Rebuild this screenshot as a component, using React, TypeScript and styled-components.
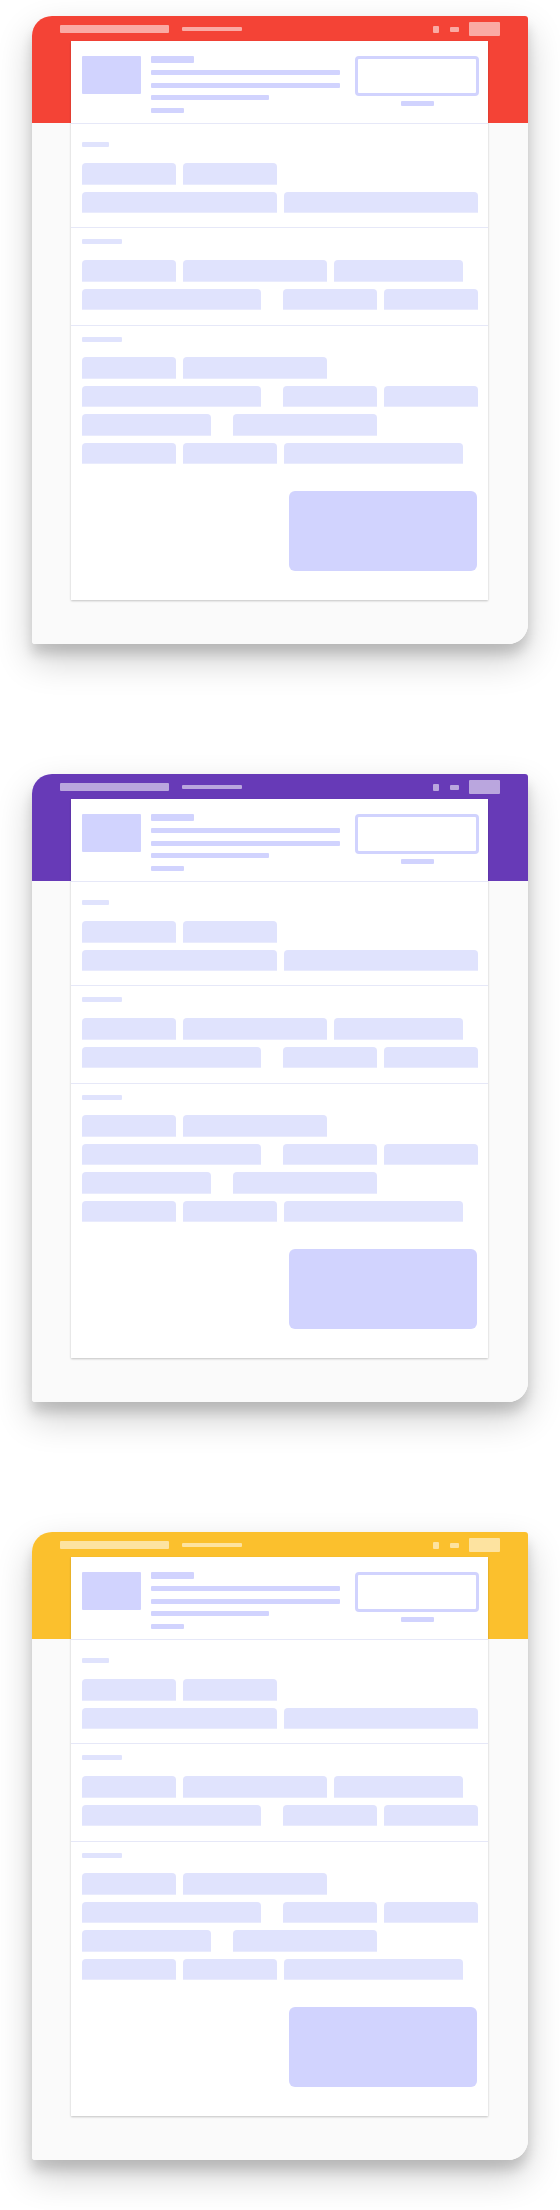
import { createGlobalStyle, styled } from "styled-components";

const GlobalStyle = createGlobalStyle`
  * { box-sizing: border-box; }
  body {
    margin: 0;
    background: #ffffff;
    font-family: "Liberation Sans", Arial, sans-serif;
  }
`;

const ACCENT = "#d1d3fe";
const LIGHT = "#e0e3fd";

const Page = styled.div`
  display: flex;
  flex-direction: column;
  gap: 130px;
  padding: 16px 32px 50px;
`;

const Card = styled.div<{ $color: string }>`
  display: flex;
  flex-direction: column;
  height: 628px;
  border-radius: 20px 3px 20px 3px;
  background: linear-gradient(
    to bottom,
    ${(p) => p.$color} 0,
    ${(p) => p.$color} 107px,
    #fafafa 107px
  );
  box-shadow: 0 16px 36px rgba(0, 0, 0, 0.2), 0 10px 12px rgba(0, 0, 0, 0.14);
`;

const TopBar = styled.div`
  display: flex;
  align-items: center;
  height: 25px;
  padding: 1px 28px 0;
`;

const Bar = styled.div<{ $w: number; $h: number; $ml?: number }>`
  width: ${(p) => p.$w}px;
  height: ${(p) => p.$h}px;
  margin-left: ${(p) => p.$ml ?? 0}px;
  border-radius: 1px;
  background: rgba(255, 255, 255, 0.55);
`;

const Spacer = styled.div`
  flex: 1;
`;

const Sheet = styled.div`
  display: flex;
  flex-direction: column;
  height: 559px;
  margin: 0 40px 0 39px;
  background: #ffffff;
  box-shadow: 0 1px 2px rgba(0, 0, 0, 0.22);
`;

const Header = styled.div`
  display: flex;
  align-items: flex-start;
  height: 83px;
  padding: 15px 9px 0 11px;
  border-bottom: 1px solid #e6e8f8;
`;

const Thumb = styled.div`
  width: 59px;
  height: 38px;
  border-radius: 1px;
  background: ${ACCENT};
`;

const TextCol = styled.div`
  display: flex;
  flex-direction: column;
  margin-left: 10px;
`;

const Line = styled.div<{ $w: number; $h?: number; $mt?: number }>`
  width: ${(p) => p.$w}px;
  height: ${(p) => p.$h ?? 5}px;
  margin-top: ${(p) => p.$mt ?? 0}px;
  border-radius: 1px;
  background: ${ACCENT};
`;

const Monitor = styled.div`
  display: flex;
  flex-direction: column;
  align-items: center;
  margin-left: auto;
`;

const Screen = styled.div`
  width: 124px;
  height: 40px;
  border: 3px solid ${ACCENT};
  border-radius: 4px;
`;

const Stand = styled.div`
  width: 33px;
  height: 5px;
  margin-top: 5px;
  border-radius: 1px;
  background: ${ACCENT};
`;

const Section = styled.div<{ $pt: number; $pb: number; $last?: boolean }>`
  display: flex;
  flex-direction: column;
  padding: ${(p) => p.$pt}px 10px ${(p) => p.$pb}px 11px;
  border-bottom: ${(p) => (p.$last ? "none" : "1px solid #e6e8f8")};
`;

const Label = styled.div<{ $w: number; $mb: number }>`
  width: ${(p) => p.$w}px;
  height: 5px;
  margin-bottom: ${(p) => p.$mb}px;
  border-radius: 1px;
  background: ${LIGHT};
`;

const Rows = styled.div`
  display: flex;
  flex-direction: column;
  gap: 7px;
`;

const Row = styled.div`
  display: flex;
  height: 21.5px;
`;

const Field = styled.div<{ $w: number; $ml: number }>`
  width: ${(p) => p.$w}px;
  margin-left: ${(p) => p.$ml}px;
  border-radius: 4px 4px 0 0;
  background: ${LIGHT};
  box-shadow: inset 0 -1px 0 #e9ebfd;
`;

const Block = styled.div`
  align-self: flex-end;
  width: 188px;
  height: 80px;
  margin-top: 27px;
  margin-right: 1px;
  border-radius: 6px;
  background: ${ACCENT};
`;

type FieldSpec = [number, number];

const section1: FieldSpec[][] = [
  [[94, 0], [94, 7]],
  [[195, 0], [194, 7]],
];

const section2: FieldSpec[][] = [
  [[94, 0], [144, 7], [129, 7]],
  [[179, 0], [94, 22], [94, 7]],
];

const section3: FieldSpec[][] = [
  [[94, 0], [144, 7]],
  [[179, 0], [94, 22], [94, 7]],
  [[129, 0], [144, 22]],
  [[94, 0], [94, 7], [179, 7]],
];

function FieldRows({ rows }: { rows: FieldSpec[][] }) {
  return (
    <Rows>
      {rows.map((row, i) => (
        <Row key={i}>
          {row.map(([w, ml], j) => (
            <Field key={j} $w={w} $ml={ml} />
          ))}
        </Row>
      ))}
    </Rows>
  );
}

function Mockup({ color }: { color: string }) {
  return (
    <Card $color={color}>
      <TopBar>
        <Bar $w={109} $h={8} />
        <Bar $w={60} $h={4} $ml={13} />
        <Spacer />
        <Bar $w={6} $h={7} />
        <Bar $w={9} $h={5} $ml={11} />
        <Bar $w={31} $h={14} $ml={10} />
      </TopBar>
      <Sheet>
        <Header>
          <Thumb />
          <TextCol>
            <Line $w={43} $h={7} />
            <Line $w={189} $mt={7} />
            <Line $w={189} $mt={8} />
            <Line $w={118} $mt={7} />
            <Line $w={33} $mt={8} />
          </TextCol>
          <Monitor>
            <Screen />
            <Stand />
          </Monitor>
        </Header>
        <Section $pt={18} $pb={14}>
          <Label $w={27} $mb={16} />
          <FieldRows rows={section1} />
        </Section>
        <Section $pt={11} $pb={15}>
          <Label $w={40} $mb={16} />
          <FieldRows rows={section2} />
        </Section>
        <Section $pt={11} $pb={0} $last>
          <Label $w={40} $mb={15} />
          <FieldRows rows={section3} />
          <Block />
        </Section>
      </Sheet>
    </Card>
  );
}

export default function App() {
  return (
    <>
      <GlobalStyle />
      <Page>
        <Mockup color="#f44336" />
        <Mockup color="#673ab7" />
        <Mockup color="#fbc02d" />
      </Page>
    </>
  );
}
